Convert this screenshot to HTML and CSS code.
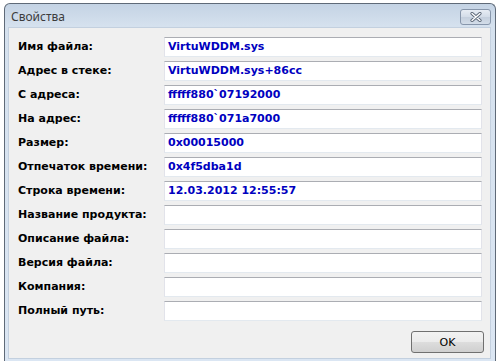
FILE: index.html
```html
<!DOCTYPE html>
<html lang="ru">
<head>
    <meta charset="UTF-8">
    <title>Свойства</title>
    <link rel="stylesheet" href="styles.css">
</head>
<body>
    <div class="window">
        <div class="titlebar">
            <span class="caption">Свойства</span>
            <button class="close-button" type="button" aria-label="Закрыть">
                <svg width="14" height="10" viewBox="0 0 14 10">
                    <path d="M3 1.5 L11 8.5 M11 1.5 L3 8.5" stroke="#5b6777" stroke-width="3.2" stroke-linecap="round"/>
                    <path d="M3 1.5 L11 8.5 M11 1.5 L3 8.5" stroke="#ffffff" stroke-width="1.4" stroke-linecap="round"/>
                </svg>
            </button>
        </div>

        <div class="client">
            <div class="props">
                <label>Имя файла:</label>
                <div class="field">VirtuWDDM.sys</div>

                <label>Адрес в стеке:</label>
                <div class="field">VirtuWDDM.sys+86cc</div>

                <label>С адреса:</label>
                <div class="field">fffff880`07192000</div>

                <label>На адрес:</label>
                <div class="field">fffff880`071a7000</div>

                <label>Размер:</label>
                <div class="field">0x00015000</div>

                <label>Отпечаток времени:</label>
                <div class="field">0x4f5dba1d</div>

                <label>Строка времени:</label>
                <div class="field">12.03.2012 12:55:57</div>

                <label>Название продукта:</label>
                <div class="field"></div>

                <label>Описание файла:</label>
                <div class="field"></div>

                <label>Версия файла:</label>
                <div class="field"></div>

                <label>Компания:</label>
                <div class="field"></div>

                <label>Полный путь:</label>
                <div class="field"></div>
            </div>

            <div class="actions">
                <button type="button" class="button">OK</button>
            </div>
        </div>
    </div>
</body>
</html>
```

FILE: styles.css
```css
body {
    margin: 0;
    padding: 0;
    width: 499px;
    height: 361px;
    overflow: hidden;
    background-color: #ffffff;
    font-family: 'DejaVu Sans', Verdana, sans-serif;
}
.window {
    margin: 3px 0 0 4px;
    width: 492px;
    box-sizing: border-box;
    border: 1px solid #5f6a78;
    border-bottom: none;
    border-radius: 6px 6px 0 0;
    background: linear-gradient(to bottom, #c4d3e4 0px, #d5e1ee 22px, #dbe6f3 100%);
    padding: 0 4px 2px 3px;
}
.titlebar {
    height: 23px;
    display: flex;
    align-items: center;
    justify-content: space-between;
}
.caption {
    font-family: 'Noto Sans', 'Open Sans', sans-serif;
    font-size: 12px;
    color: #3c3c3c;
    padding-left: 3px;
    padding-top: 1px;
}
.close-button {
    width: 31px;
    height: 16px;
    margin-top: 2px;
    padding: 0;
    border: 1px solid #8796ab;
    border-radius: 3px;
    background: linear-gradient(to bottom, #e7edf4 0%, #d3dce8 50%, #c4cfdd 51%, #d3dde9 100%);
    display: flex;
    align-items: center;
    justify-content: center;
}
.client {
    background-color: #f0f0f0;
    border: 1px solid #c3d0df;
    padding: 9px 6px 5px 9px;
}
.props {
    display: grid;
    grid-template-columns: 146px 318px;
    row-gap: 4px;
}
label {
    font-size: 11px;
    font-weight: bold;
    color: #000000;
    line-height: 20px;
    white-space: nowrap;
}
.field {
    height: 20px;
    box-sizing: border-box;
    background-color: #ffffff;
    border: 1px solid #e2e3ea;
    border-top-color: #abadb3;
    border-bottom-color: #e3e9ef;
    padding-left: 3px;
    font-size: 11px;
    font-weight: bold;
    color: #0000c0;
    line-height: 18px;
    white-space: nowrap;
}
.actions {
    display: flex;
    justify-content: flex-end;
    margin-top: 10px;
}
.button {
    width: 73px;
    height: 22px;
    border: 1px solid #707070;
    border-radius: 3px;
    background: linear-gradient(to bottom, #f2f2f2 0%, #ebebeb 50%, #dddddd 51%, #cfcfcf 100%);
    font-family: 'DejaVu Sans', Verdana, sans-serif;
    font-size: 11px;
    color: #000000;
    padding: 0;
}
```
